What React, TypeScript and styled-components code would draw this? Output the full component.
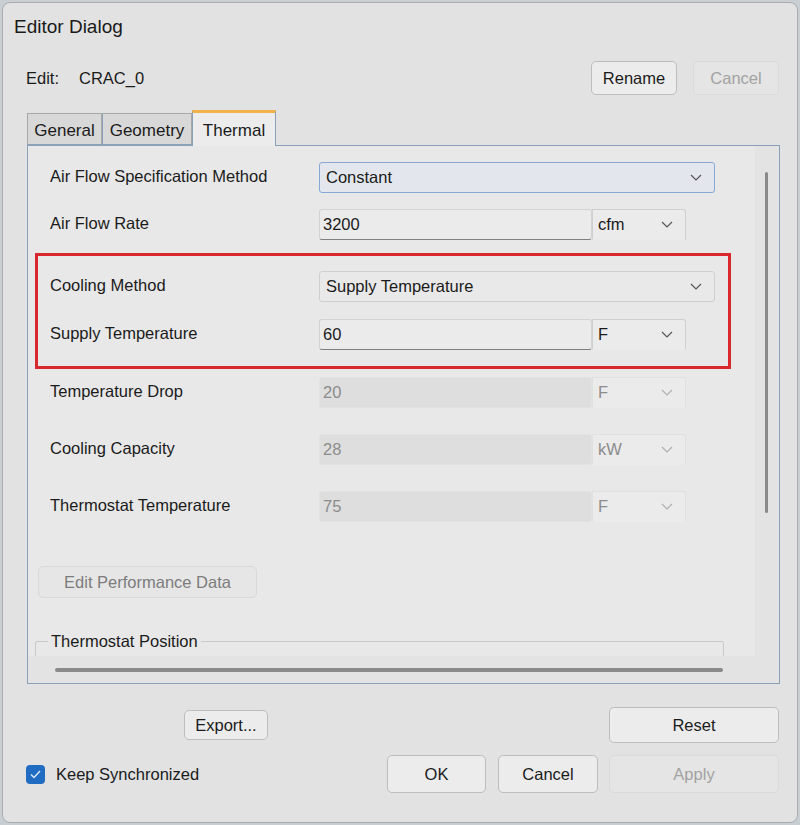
import React from "react";
import styled, { createGlobalStyle } from "styled-components";

const GlobalStyle = createGlobalStyle`
  html, body {
    margin: 0;
    padding: 0;
    background: #c9ced3;
  }
  body {
    font-family: "Liberation Sans", Arial, sans-serif;
    color: #1b1b1b;
  }
`;

const Window = styled.div`
  box-sizing: border-box;
  width: 796px;
  height: 821px;
  margin: 2px 0 0 2px;
  background: #e2e2e2;
  border: 1px solid #a9adb1;
  border-radius: 8px;
  display: flex;
  flex-direction: column;
  overflow: hidden;
`;

const TitleBar = styled.div`
  height: 47px;
  display: flex;
  align-items: center;
  padding-left: 11px;
  font-size: 19px;
  color: #1a1a1a;
`;

const Body = styled.div`
  display: flex;
  flex-direction: column;
  padding: 0 18px 0 24px;
`;

const EditRow = styled.div`
  display: flex;
  align-items: center;
  height: 34px;
  margin-top: 11px;
  font-size: 16.5px;

  .edit-label {
    width: 53px;
    margin-left: -1px;
  }

  .spacer {
    flex: 1;
  }
`;

const Button = styled.button<{ $w: number; $h: number; $disabled?: boolean }>`
  box-sizing: border-box;
  width: ${(p) => p.$w}px;
  height: ${(p) => p.$h}px;
  padding: 0;
  font-family: "Liberation Sans", Arial, sans-serif;
  font-size: 16.5px;
  border-radius: 5px;
  background: ${(p) => (p.$disabled ? "#e5e5e5" : "#ececec")};
  border: 1px solid ${(p) => (p.$disabled ? "#dadada" : "#bdbdbd")};
  color: ${(p) => (p.$disabled ? "#a2a2a2" : "#1b1b1b")};
`;

const ButtonGroup = styled.div`
  display: flex;
  gap: 16px;
`;

const TabStrip = styled.div`
  display: flex;
  align-items: flex-end;
  height: 35px;
  margin-top: 15px;
  position: relative;
  z-index: 1;
`;

const Tab = styled.div<{ $w: number; $active?: boolean }>`
  box-sizing: border-box;
  width: ${(p) => p.$w}px;
  height: ${(p) => (p.$active ? 36 : 32)}px;
  margin-bottom: ${(p) => (p.$active ? -1 : 0)}px;
  display: flex;
  align-items: center;
  justify-content: center;
  font-size: 17px;
  background: ${(p) => (p.$active ? "#ececec" : "#d8d8d8")};
  border: 1px solid ${(p) => (p.$active ? "#8ba1b7" : "#a8a8a8")};
  border-bottom: ${(p) => (p.$active ? "none" : "1px solid #8ba1b7")};
  border-top: ${(p) => (p.$active ? "3px solid #f2b24a" : "1px solid #a8a8a8")};
  padding-top: ${(p) => (p.$active ? 2 : 4)}px;
  & + & {
    border-left: ${(p) => (p.$active ? "1px solid #8ba1b7" : "none")};
  }
`;

const TabPanel = styled.div`
  box-sizing: border-box;
  width: 753px;
  height: 539px;
  border: 1px solid #8ba1b7;
  background: #e3e3e3;
  display: grid;
  grid-template-columns: 1fr 24px;
  grid-template-rows: 510px 1fr;
`;

const Viewport = styled.div`
  background: #e8e8e8;
  overflow: hidden;
  padding-left: 10px;
  padding-top: 16px;
  display: flex;
  flex-direction: column;
  font-size: 16.5px;

  & > * {
    flex-shrink: 0;
  }
`;

const VScroll = styled.div`
  grid-row: 1 / 3;
  grid-column: 2;
  background: #e3e3e3;
  padding: 26px 0 0 10px;
`;

const VThumb = styled.div`
  width: 3px;
  height: 341px;
  border-radius: 2px;
  background: #8a8a8a;
`;

const HScroll = styled.div`
  grid-row: 2;
  grid-column: 1;
  padding: 12px 0 0 27px;
`;

const HThumb = styled.div`
  width: 668px;
  height: 4px;
  border-radius: 2px;
  background: #8a8a8a;
`;

const Row = styled.div<{ $mt?: number }>`
  display: grid;
  grid-template-columns: 269px auto;
  align-items: center;
  height: 31px;
  width: 678px;
  padding-left: 12px;
  margin-top: ${(p) => p.$mt ?? 0}px;
`;

const Label = styled.div`
  margin-top: -2px;
`;

const Controls = styled.div`
  display: flex;
  height: 31px;
`;

const SelectBox = styled.div<{ $w: number; $focused?: boolean; $disabled?: boolean; $unit?: boolean }>`
  box-sizing: border-box;
  width: ${(p) => p.$w}px;
  height: 100%;
  display: flex;
  align-items: center;
  justify-content: space-between;
  padding: 0 12px 0 ${(p) => (p.$unit ? 5 : 6)}px;
  background: ${(p) => (p.$focused ? "#e3e7ed" : p.$unit ? "#ebebeb" : "#e9e9e9")};
  border: 1px solid ${(p) => (p.$focused ? "#86a8d3" : p.$disabled ? "#e0e0e0" : "#cfcfcf")};
  border-bottom-color: ${(p) =>
    p.$focused ? "#86a8d3" : p.$unit ? "transparent" : p.$disabled ? "#e0e0e0" : "#cfcfcf"};
  border-radius: ${(p) => (p.$unit ? "0 3px 0 0" : "3px")};
  color: ${(p) => (p.$disabled ? "#8c8c8c" : "#1b1b1b")};
  svg path {
    stroke: ${(p) => (p.$disabled ? "#b0b0b0" : "#555")};
  }
`;

const TextInput = styled.div<{ $disabled?: boolean }>`
  box-sizing: border-box;
  width: 273px;
  height: 100%;
  display: flex;
  align-items: center;
  padding-left: 3px;
  background: ${(p) => (p.$disabled ? "#dedede" : "#ebebeb")};
  border: 1px solid ${(p) => (p.$disabled ? "#e2e2e2" : "#d3d3d3")};
  border-bottom-color: ${(p) => (p.$disabled ? "#e2e2e2" : "#7f7f7f")};
  border-radius: 3px;
  color: ${(p) => (p.$disabled ? "#8c8c8c" : "#1b1b1b")};
`;

const Highlight = styled.div`
  width: 690px;
  outline: 3px solid #d9272e;
  margin-top: 16px;
  padding: 15px 0 16px;
`;

const PerfButton = styled.div`
  box-sizing: border-box;
  width: 219px;
  height: 32px;
  margin-top: 44px;
  display: flex;
  align-items: center;
  justify-content: center;
  border: 1px solid #d9d9d9;
  border-radius: 5px;
  background: #e6e6e6;
  color: #7c7c7c;
  font-size: 16.5px;
`;

const GroupBox = styled.fieldset`
  margin: 34px 0 0 -3px;
  width: 689px;
  height: 60px;
  padding: 0;
  border: 1px solid #c9c9c9;
  border-radius: 2px;
  box-sizing: border-box;

  legend {
    margin-left: 12px;
    padding: 0 3px;
    font-size: 16.5px;
  }
`;

const Footer = styled.div`
  display: grid;
  grid-template-columns: 349px 99px 100px 170px;
  column-gap: 12px;
  row-gap: 12px;
  margin-top: 23px;
  margin-left: -1px;
  align-items: center;

  & > :nth-child(4n) {
    margin-left: -1px;
  }
`;

const ExportCell = styled.div`
  grid-column: 1;
  padding-left: 158px;
  display: flex;
  align-items: center;
`;

const Check = styled.label`
  display: flex;
  align-items: center;
  gap: 11px;
  font-size: 16.5px;

  .box {
    width: 19px;
    height: 19px;
    border-radius: 4px;
    background: #1f6cc2;
    display: flex;
    align-items: center;
    justify-content: center;
  }
`;

const Chevron = () => (
  <svg width="12" height="7" viewBox="0 0 12 7">
    <path d="M1 1 L6 6 L11 1" fill="none" strokeWidth="1.2" />
  </svg>
);

type FieldRow = {
  label: string;
  value: string;
  unit?: string;
  select?: boolean;
  focused?: boolean;
  disabled?: boolean;
  mt?: number;
};

const Field = ({ label, value, unit, select, focused, disabled, mt }: FieldRow) => (
  <Row $mt={mt}>
    <Label>{label}</Label>
    <Controls>
      {select ? (
        <SelectBox $w={396} $focused={focused}>
          <span>{value}</span>
          <Chevron />
        </SelectBox>
      ) : (
        <>
          <TextInput $disabled={disabled}>{value}</TextInput>
          <SelectBox $w={94} $unit $disabled={disabled}>
            <span>{unit}</span>
            <Chevron />
          </SelectBox>
        </>
      )}
    </Controls>
  </Row>
);

export default function App() {
  return (
    <>
      <GlobalStyle />
      <Window>
        <TitleBar>Editor Dialog</TitleBar>
        <Body>
          <EditRow>
            <span className="edit-label">Edit:</span>
            <span>CRAC_0</span>
            <span className="spacer" />
            <ButtonGroup>
              <Button $w={86} $h={34}>Rename</Button>
              <Button $w={86} $h={34} $disabled>Cancel</Button>
            </ButtonGroup>
          </EditRow>

          <TabStrip>
            <Tab $w={75}>General</Tab>
            <Tab $w={90}>Geometry</Tab>
            <Tab $w={84} $active>Thermal</Tab>
          </TabStrip>

          <TabPanel>
            <Viewport>
              <Field label="Air Flow Specification Method" value="Constant" select focused />
              <Field label="Air Flow Rate" value="3200" unit="cfm" mt={16} />
              <Highlight>
                <Field label="Cooling Method" value="Supply Temperature" select />
                <Field label="Supply Temperature" value="60" unit="F" mt={17} />
              </Highlight>
              <Field label="Temperature Drop" value="20" unit="F" disabled mt={11} />
              <Field label="Cooling Capacity" value="28" unit="kW" disabled mt={26} />
              <Field label="Thermostat Temperature" value="75" unit="F" disabled mt={26} />
              <PerfButton>Edit Performance Data</PerfButton>
              <GroupBox>
                <legend>Thermostat Position</legend>
              </GroupBox>
            </Viewport>
            <VScroll>
              <VThumb />
            </VScroll>
            <HScroll>
              <HThumb />
            </HScroll>
          </TabPanel>

          <Footer>
            <ExportCell>
              <Button $w={84} $h={30}>Export...</Button>
            </ExportCell>
            <span />
            <span />
            <Button $w={170} $h={36}>Reset</Button>

            <Check>
              <span className="box">
                <svg width="11" height="9" viewBox="0 0 11 9">
                  <path d="M1 4.5 L4 7.5 L10 1" fill="none" stroke="#dfe9f5" strokeWidth="1.4" />
                </svg>
              </span>
              Keep Synchronized
            </Check>
            <Button $w={99} $h={38}>OK</Button>
            <Button $w={100} $h={38}>Cancel</Button>
            <Button $w={170} $h={38} $disabled>Apply</Button>
          </Footer>
        </Body>
      </Window>
    </>
  );
}
